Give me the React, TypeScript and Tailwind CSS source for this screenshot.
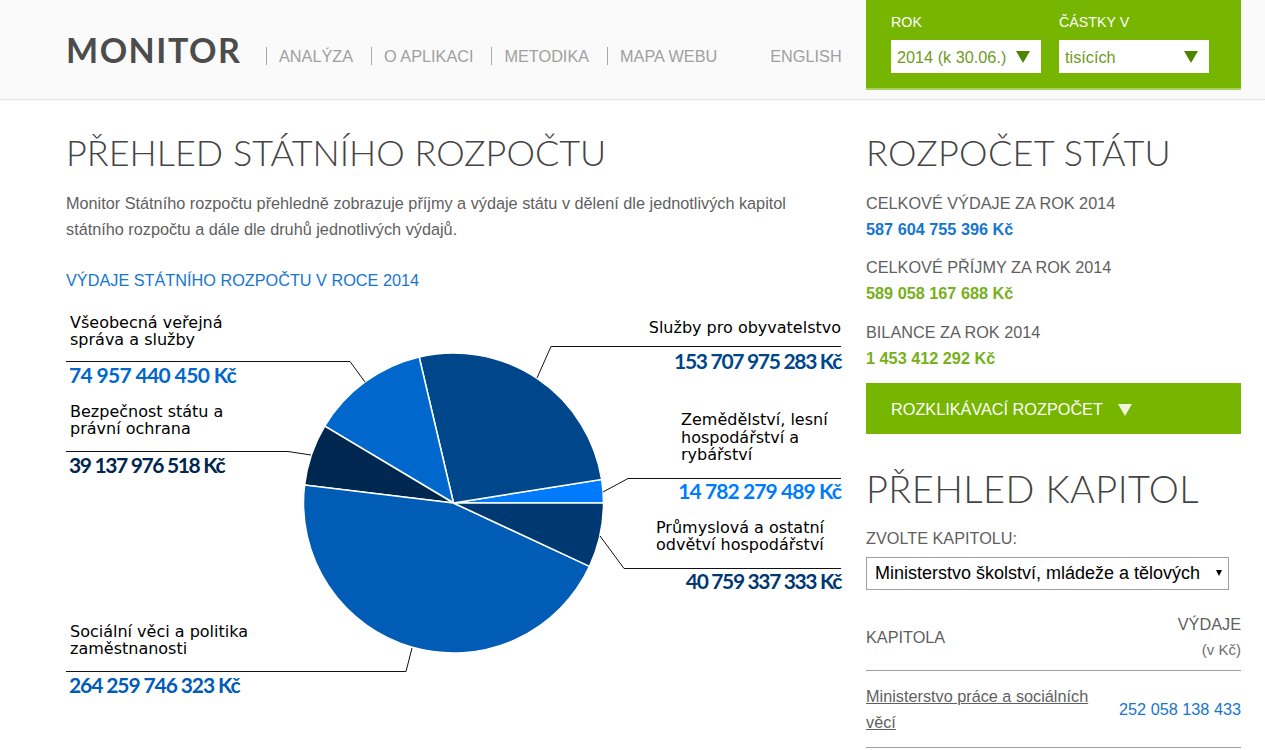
const SLICES = [
  { value: 14782279489, color: '#007bff' },
  { value: 153707975283, color: '#00468a' },
  { value: 74957440450, color: '#0068cc' },
  { value: 39137976518, color: '#00274f' },
  { value: 264259746323, color: '#005cb4' },
  { value: 40759337333, color: '#003872' },
]

const LEADERS = [
  '66,361.5 350,361.5 365,382',
  '66,451.5 288,451.5 311,455',
  '841,346.5 551,346.5 537,378',
  '841,478.5 628,478.5 603,492',
  '841,568.5 624,568.5 600,536',
  '66,671.5 406,671.5 412,648',
]

const CX = 453.5
const CY = 503
const R = 150

function slicePaths() {
  const total = SLICES.reduce((sum, s) => sum + s.value, 0)
  let angle = 0
  return SLICES.map(s => {
    const next = angle + (s.value / total) * Math.PI * 2
    const x1 = CX + R * Math.cos(angle)
    const y1 = CY - R * Math.sin(angle)
    const x2 = CX + R * Math.cos(next)
    const y2 = CY - R * Math.sin(next)
    const large = next - angle > Math.PI ? 1 : 0
    angle = next
    return { d: `M${CX} ${CY}L${x1} ${y1}A${R} ${R} 0 ${large} 0 ${x2} ${y2}Z`, color: s.color }
  })
}

function Triangle({ className }: { className: string }) {
  return (
    <svg width="14" height="12" viewBox="0 0 14 12" className={className}>
      <path d="M0 0H14L7 12Z" fill="currentColor" />
    </svg>
  )
}

function Heading({ children, className = '' }: { children: string, className?: string }) {
  return <h1 className={`font-['Lato',sans-serif] font-light text-[36px] leading-[44px] text-[#444] ${className}`}>{children}</h1>
}

function NavItem({ children }: { children: string }) {
  return <a className="border-l border-[#a8a8a8] pl-3 mr-[18px] h-[18px] leading-[18px] text-[16.25px] text-[#a0a0a0]">{children}</a>
}

function Pick({ label, value }: { label: string, value: string }) {
  return (
    <div className="w-[150px]">
      <div className="text-[14.25px] leading-[18px] text-white mb-[9px]">{label}</div>
      <div className="h-[33px] bg-white flex items-center justify-between pl-[6px] pr-[11px] pt-[1px] text-[16.25px] text-[#6f9a1f]">
        <span>{value}</span>
        <Triangle className="text-[#4d8500]" />
      </div>
    </div>
  )
}

function Total({ label, value, color, className = '' }: { label: string, value: string, color: string, className?: string }) {
  return (
    <div className={`h-[64px] ${className}`}>
      <div className="text-[16.25px] leading-[26px] text-[#5f5f5f]">{label}</div>
      <div className={`mt-[1px] text-[16.25px] leading-[25px] font-bold ${color}`}>{value}</div>
    </div>
  )
}

function ChartLabel({ className, lines }: { className: string, lines: string[] }) {
  return (
    <div className={`absolute font-['DejaVu_Sans',sans-serif] text-[16px] leading-[17.5px] text-black whitespace-nowrap ${className}`}>
      {lines.map(line => <div key={line}>{line}</div>)}
    </div>
  )
}

function ChartValue({ className, children }: { className: string, children: string }) {
  return (
    <div className={`absolute font-['Lato',sans-serif] font-bold text-[21px] leading-[26px] whitespace-nowrap ${className}`}>
      {children}
    </div>
  )
}

export default function App() {
  return (
    <div className="h-[750px] overflow-hidden bg-white font-['Liberation_Sans',Arial,sans-serif]">
      <header className="h-[100px] bg-[#fafafa] border-b border-[#e2e2e2] shadow-[0_1px_2px_rgba(0,0,0,0.04)] pl-[66px] flex">
        <div className="w-[800px] flex items-start">
          <div className="font-['Lato',sans-serif] font-bold text-[34px] leading-[34px] tracking-[1.5px] text-[#4c4c4c] mt-[33px] w-[200px]">MONITOR</div>
          <nav className="flex items-center mt-[47px]">
            <NavItem>ANALÝZA</NavItem>
            <NavItem>O APLIKACI</NavItem>
            <NavItem>METODIKA</NavItem>
            <NavItem>MAPA WEBU</NavItem>
            <a className="ml-[35px] text-[16.25px] leading-[18px] text-[#a0a0a0]">ENGLISH</a>
          </nav>
        </div>
        <div className="w-[375px] h-[90px] bg-[#76b500] border-b-2 border-[#a9cf62] flex gap-[18px] pl-[25px] pt-[13px]">
          <Pick label="ROK" value="2014 (k 30.06.)" />
          <Pick label="ČÁSTKY V" value="tisících" />
        </div>
      </header>

      <main className="flex gap-[25px] pl-[66px]">
        <section className="w-[775px]">
          <div className="pt-[30px]">
            <Heading>PŘEHLED STÁTNÍHO ROZPOČTU</Heading>
          </div>
          <p className="mt-[16px] text-[16.25px] leading-[26px] text-[#5f5f5f] whitespace-nowrap">
            Monitor Státního rozpočtu přehledně zobrazuje příjmy a výdaje státu v dělení dle jednotlivých kapitol
            <br />
            státního rozpočtu a dále dle druhů jednotlivých výdajů.
          </p>
          <h2 className="mt-[25px] text-[16.25px] leading-[26px] text-[#1676cf]">VÝDAJE STÁTNÍHO ROZPOČTU V ROCE 2014</h2>

          <div className="relative h-[410px] mt-[7px]">
            <svg viewBox="66 300 775 410" className="absolute inset-0 w-[775px] h-[410px]">
              {slicePaths().map(p => (
                <path key={p.color} d={p.d} fill={p.color} stroke="#fff" strokeWidth="1.5" />
              ))}
              {LEADERS.map(points => (
                <polyline key={points} points={points} fill="none" stroke="#111" strokeWidth="1" />
              ))}
            </svg>
            <ChartLabel className="left-[4px] top-[13.5px]" lines={['Všeobecná veřejná', 'správa a služby']} />
            <ChartValue className="left-[3px] top-[62px] tracking-[-0.65px] text-[#0068cc]">74 957 440 450 Kč</ChartValue>
            <ChartLabel className="left-[4px] top-[102.5px]" lines={['Bezpečnost státu a', 'právní ochrana']} />
            <ChartValue className="left-[3px] top-[152px] tracking-[-1.35px] text-[#00274f]">39 137 976 518 Kč</ChartValue>
            <ChartLabel className="left-[4px] top-[322.5px]" lines={['Sociální věci a politika', 'zaměstnanosti']} />
            <ChartValue className="left-[3px] top-[372px] tracking-[-1.1px] text-[#005cb4]">264 259 746 323 Kč</ChartValue>

            <ChartLabel className="right-0 top-[19px]" lines={['Služby pro obyvatelstvo']} />
            <ChartValue className="right-0 top-[48px] tracking-[-1.3px] text-[#00468a]">153 707 975 283 Kč</ChartValue>
            <ChartLabel className="left-[615px] top-[111px]" lines={['Zemědělství, lesní', 'hospodářství a', 'rybářství']} />
            <ChartValue className="right-0 top-[178px] tracking-[-0.9px] text-[#007bff]">14 782 279 489 Kč</ChartValue>
            <ChartLabel className="left-[590px] top-[218.5px]" lines={['Průmyslová a ostatní', 'odvětví hospodářství']} />
            <ChartValue className="right-0 top-[268px] tracking-[-1.35px] text-[#003872]">40 759 337 333 Kč</ChartValue>
          </div>
        </section>

        <aside className="w-[375px]">
          <div className="pt-[30px]">
            <Heading className="tracking-[0.3px]">ROZPOČET STÁTU</Heading>
          </div>
          <div className="mt-[16px]">
            <Total label="CELKOVÉ VÝDAJE ZA ROK 2014" value="587 604 755 396 Kč" color="text-[#1676cf]" />
            <Total label="CELKOVÉ PŘÍJMY ZA ROK 2014" value="589 058 167 688 Kč" color="text-[#76b01a]" />
            <Total label="BILANCE ZA ROK 2014" value="1 453 412 292 Kč" color="text-[#76b01a]" className="mt-[1px]" />
          </div>
          <button className="block w-full h-[51px] bg-[#76b500] text-left pl-[25px] pt-[1px] text-[16.25px] text-white">
            ROZKLIKÁVACÍ ROZPOČET
            <Triangle className="inline-block ml-[15px] mb-[2px] text-[#eef5dc]" />
          </button>
          <div className="mt-[32px]">
            <Heading className="text-[38px] tracking-[0.4px]">PŘEHLED KAPITOL</Heading>
          </div>
          <div className="mt-[15px] text-[16.25px] leading-[26px] text-[#5f5f5f]">ZVOLTE KAPITOLU:</div>
          <div className="relative mt-[6px] w-[363px]">
            <select className="block w-full h-[33px] appearance-none border border-[#a0a0a0] bg-white pl-[8px] text-[18px] text-black">
              <option>Ministerstvo školství, mládeže a tělových</option>
            </select>
            <svg width="6" height="6" viewBox="0 0 6 6" className="absolute right-[7px] top-[13px] text-black">
              <path d="M0 0H6L3 6Z" fill="currentColor" />
            </svg>
          </div>
          <table className="mt-[17px] w-full text-[16.25px] text-[#5f5f5f]">
            <thead>
              <tr className="border-b border-[#a0a0a0] h-[63px]">
                <th className="font-normal text-left pb-[2px]">KAPITOLA</th>
                <th className="font-normal text-right leading-[26px] pb-[2px]">
                  VÝDAJE
                  <div className="text-[15px] text-[#6f6f6f]">(v Kč)</div>
                </th>
              </tr>
            </thead>
            <tbody>
              <tr className="border-b border-[#a0a0a0] h-[77px]">
                <td className="leading-[26px] w-[240px]"><a className="underline">Ministerstvo práce a sociálních věcí</a></td>
                <td className="text-right text-[#1676cf] pt-[2px]">252 058 138 433</td>
              </tr>
            </tbody>
          </table>
        </aside>
      </main>
    </div>
  )
}
